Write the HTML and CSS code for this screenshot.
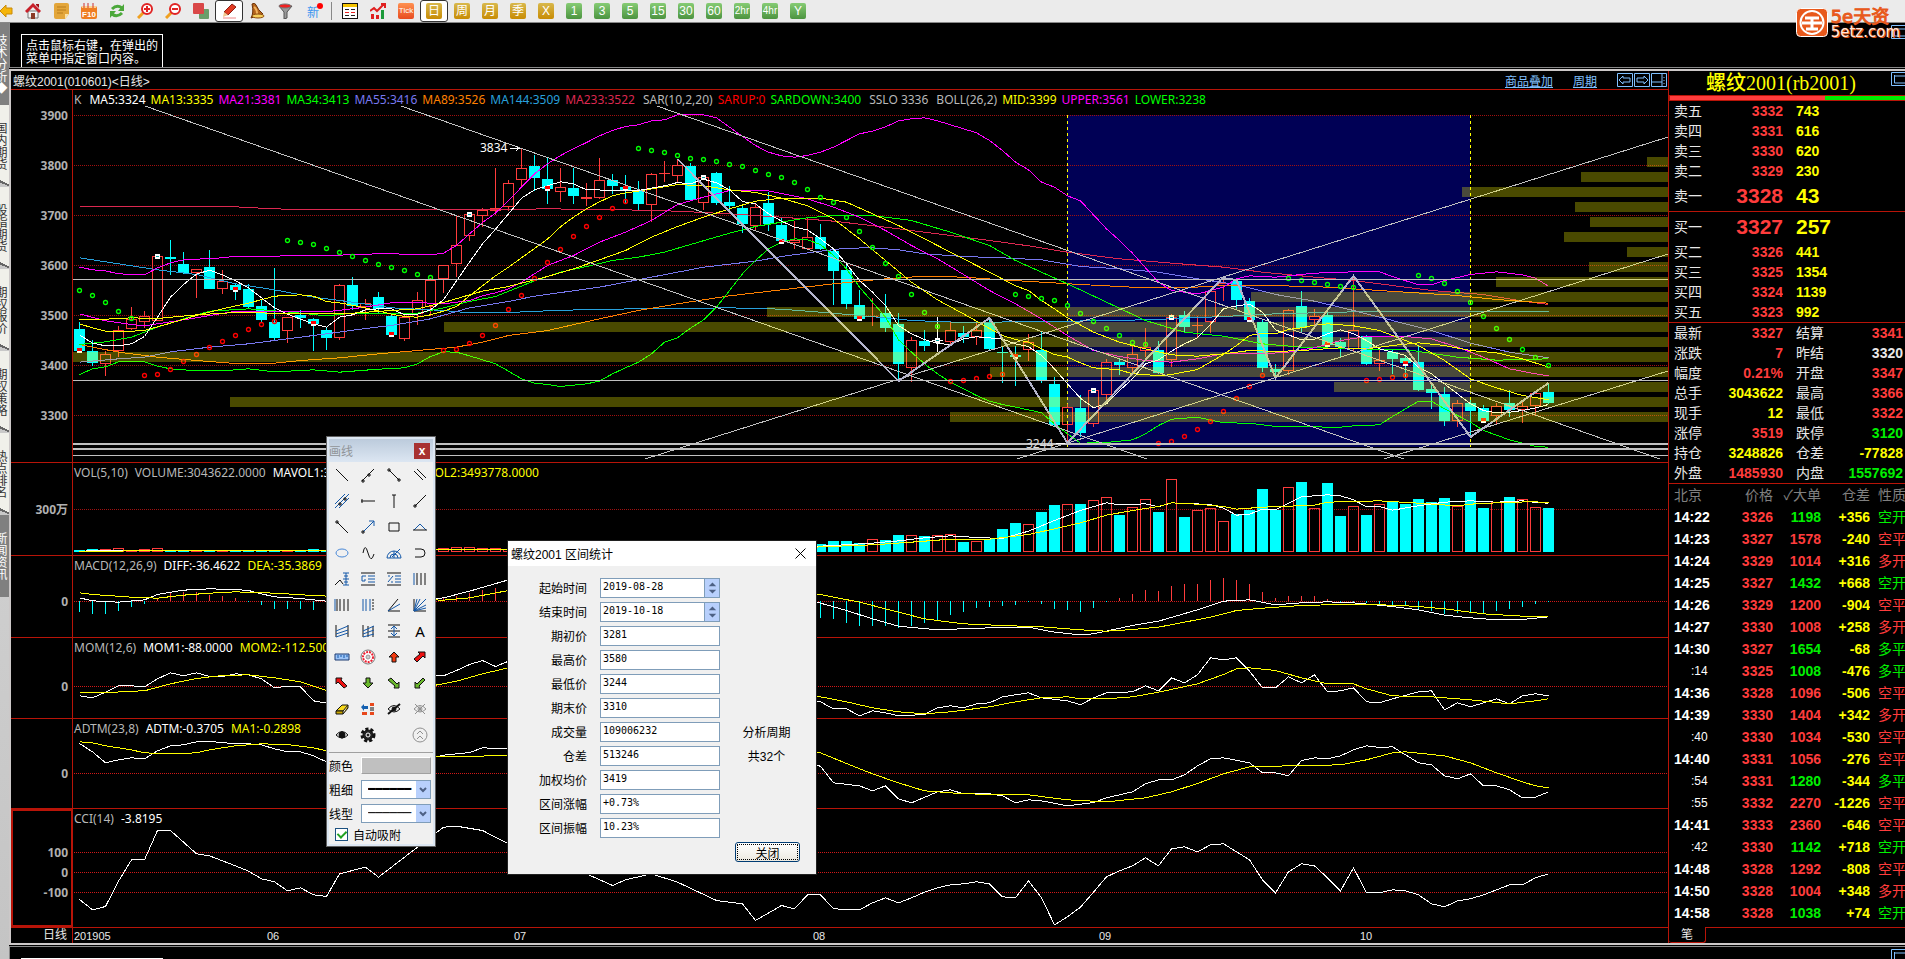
FILE: index.html
```
<!DOCTYPE html>
<html lang="zh-CN">
  <head>
    <meta charset="utf-8">
    <title>螺纹2001(010601)</title>
    <link rel="stylesheet" href="styles.css">
  </head>
  <body>
  <div class="toolbar">
    <button title="后退"><svg viewBox="0 0 16 16"><path d="M3 8L9 2v3h6v6H9v3z" fill="#f5b50a" stroke="#c98a08"/></svg></button>
    <button title="首页"><svg viewBox="0 0 16 16"><path d="M3 8h10v7H3z" fill="#f4f4f4" stroke="#777"/><path d="M0 8l8-8 8 8-2 2-6-6-6 6z" fill="#c8202a"/><path d="M11 1h3v4l-3-3z" fill="#a01018"/><path d="M6 10h4v6H6z" fill="#8a3b28"/></svg></button>
    <button title="公告"><svg viewBox="0 0 16 16"><path d="M1 2q0-2 2-2h11q2 0 2 2v9l-4 5H3q-2 0-2-2z" fill="#e3a63a"/><path d="M16 11l-4 5v-5z" fill="#fbe2a4"/><path d="M4 4h9M4 7h9M4 10h6" stroke="#b87c1c"/></svg></button>
    <button title="F10"><svg viewBox="0 0 16 16"><rect y="3" width="16" height="13" rx="2" fill="#ef7d22"/><path d="M1 4h14" stroke="#ffd28a" stroke-width="2"/><path d="M3 0v5M7 0v5M12 0v5" stroke="#c33"/><text x="8" y="14" text-anchor="middle" font-size="8" font-weight="bold" fill="#fff">F10</text></svg></button>
    <button title="刷新"><svg viewBox="0 0 16 16"><path d="M3 6q5-5 10-1M13 10q-5 5-10 1" fill="none" stroke="#4ba83a" stroke-width="3"/><path d="M15 1v7H9zM1 15V8h6z" fill="#4ba83a"/></svg></button>
    <button title="放大"><svg viewBox="0 0 16 16"><path d="M1 15l6-6" stroke="#f0a020" stroke-width="3"/><circle cx="10" cy="6" r="5" fill="#fff" stroke="#e02424" stroke-width="2"/><path d="M7 6h6M10 3v6" stroke="#e02424" stroke-width="2"/></svg></button>
    <button title="缩小"><svg viewBox="0 0 16 16"><path d="M1 15l6-6" stroke="#f0a020" stroke-width="3"/><circle cx="10" cy="6" r="5" fill="#fff" stroke="#e02424" stroke-width="2"/><path d="M7 6h6" stroke="#e02424" stroke-width="2"/></svg></button>
    <button title="叠加"><svg viewBox="0 0 16 16"><rect x="6" y="6" width="10" height="10" rx="1" fill="#6a9e6a"/><rect width="11" height="11" rx="1" fill="#d94848"/></svg></button>
    <button title="画线" class="on"><svg viewBox="0 0 16 16"><path d="M3 9l8-8 4 3-8 8z" fill="#e23a22" stroke="#8c2216"/><path d="M3 9l4 3-5 2z" fill="#f2c58c"/><path d="M2 15h13" stroke="#e88"/></svg></button>
    <button title="预警"><svg viewBox="0 0 16 16"><path d="M3 1q3-2 4 1 2 5 7 9l-12 4q3-5 1-14z" fill="#b5651d" stroke="#6b3208"/><path d="M5 4q3 2 3 7" fill="none" stroke="#f2b25c" stroke-width="2"/><ellipse cx="9" cy="13" rx="6" ry="2" fill="#f7cf5c" stroke="#8a4a10"/></svg></button>
    <button title="筛选"><svg viewBox="0 0 16 16"><path d="M2 3l5 6v7l3-1V9l5-6z" fill="#999" stroke="#555"/><ellipse cx="8" cy="3" rx="6" ry="2" fill="#f02020" stroke="#777"/></svg></button>
    <button title="新" class="news">新<i></i></button>
    <span class="sep"></span>
    <button title="报价"><svg viewBox="0 0 16 16" shape-rendering="crispEdges"><path d="M0 0h16v16H0z" fill="#fff" stroke="#111" stroke-width="2"/><path d="M1 1h14v3H1z" fill="#f5c400"/><path d="M3 6h4M9 6h4M3 12h4M9 12h4" stroke="#222"/><path d="M3 9h4M9 9h4" stroke="#e22"/></svg></button>
    <button title="走势"><svg viewBox="0 0 16 16"><path d="M1 11h3v5H1zM6 12h3v4H6z" fill="#e02020"/><path d="M11 7h3v9h-3z" fill="#1c9a3a"/><path d="M0 8l4-3 3 3 7-7M11 1h4v4" fill="none" stroke="#e02020" stroke-width="2"/></svg></button>
    <button title="Tick"><b class="tile tick">Tick</b></button>
    <button title="日" class="on"><b class="tile gold">日</b></button>
    <button title="周"><b class="tile gold">周</b></button>
    <button title="月"><b class="tile gold">月</b></button>
    <button title="季"><b class="tile gold">季</b></button>
    <button title="X"><b class="tile gold">X</b></button>
    <button title="1"><b class="tile">1</b></button>
    <button title="3"><b class="tile">3</b></button>
    <button title="5"><b class="tile">5</b></button>
    <button title="15"><b class="tile">15</b></button>
    <button title="30"><b class="tile">30</b></button>
    <button title="60"><b class="tile">60</b></button>
    <button title="2hr"><b class="tile small">2hr</b></button>
    <button title="4hr"><b class="tile small">4hr</b></button>
    <button title="Y"><b class="tile">Y</b></button>
  </div>

  <div class="frame">
    <nav class="tabs">
      <a href="#" class="tab dark">技术分析◆</a>
      <a href="#" class="tab">国内期货</a>
      <a href="#" class="tab">股指期货</a>
      <a href="#" class="tab">期权报价</a>
      <a href="#" class="tab">期权策略</a>
      <a href="#" class="tab">热点排名</a>
      <a href="#" class="tab dark">新闻资讯</a>
    </nav>

    <div class="work">
      <div class="emptypane">
        <p class="hint">点击鼠标右键，在弹出的<br>菜单中指定窗口内容。</p>
        <svg class="maxbox" viewBox="0 0 14 14"><path d="M.5.5h16v13H.5zM3 4h14M3.5 3v8h14"/></svg>
      </div>

      <div class="window">
        <main class="chart">
          <div class="charthead">
            <span>螺纹2001(010601)&lt;日线&gt;</span>
            <a href="#" class="push">商品叠加</a>
            <a href="#">周期</a>
            <svg class="navico" viewBox="0 0 50 14"><path d="M.5.5h15v13H.5zM17.500.5h15v13h-15zM34.500.5h15v13h-15zM2 7l4-4v2h7v4H6v2zM31 7l-4-4v2h-7v4h7v2zM45 1v12M35 9h10M47 4v1M47 7v1M47 10v1"/></svg>
          </div>

          <section class="pane">
            <div class="axis"></div>
            <div class="plot">
              <div class="legend main"><span>K</span><span class="white group">MA5:3324</span><span class="yellow">MA13:3335</span><span class="magenta">MA21:3381</span><span class="green">MA34:3413</span><span class="violet">MA55:3416</span><span class="orange">MA89:3526</span><span class="blue">MA144:3509</span><span class="crimson">MA233:3522</span><span class="group">SAR(10,2,20)</span><span class="red">SARUP:0</span><span class="green">SARDOWN:3400</span><span class="group">SSLO 3336</span><span class="group">BOLL(26,2)</span><span class="yellow">MID:3399</span><span class="magenta">UPPER:3561</span><span class="green">LOWER:3238</span></div>
              <svg id="price" class="price"></svg>
            </div>
          </section>
          <section class="pane">
            <div class="axis"></div>
            <div class="plot">
              <div class="legend"><span>VOL(5,10)</span><span>VOLUME:3043622.0000</span><span class="white">MAVOL1:3413050.0000</span><span class="yellow">MAVOL2:3493778.0000</span></div>
              <svg id="vol" class="vol"></svg>
            </div>
          </section>
          <section class="pane">
            <div class="axis"></div>
            <div class="plot">
              <div class="legend"><span>MACD(12,26,9)</span><span class="white">DIFF:-36.4622</span><span class="yellow">DEA:-35.3869</span></div>
              <svg id="macd" class="macd"></svg>
            </div>
          </section>
          <section class="pane">
            <div class="axis"></div>
            <div class="plot">
              <div class="legend"><span>MOM(12,6)</span><span class="white">MOM1:-88.0000</span><span class="yellow">MOM2:-112.5000</span></div>
              <svg id="mom" class="mom"></svg>
            </div>
          </section>
          <section class="pane">
            <div class="axis"></div>
            <div class="plot">
              <div class="legend"><span>ADTM(23,8)</span><span class="white">ADTM:-0.3705</span><span class="yellow">MA1:-0.2898</span></div>
              <svg id="adtm" class="adtm"></svg>
            </div>
          </section>
          <section class="pane">
            <div class="axis picked"></div>
            <div class="plot">
              <div class="legend"><span>CCI(14)</span><span class="white">-3.8195</span></div>
              <svg id="cci" class="cci"></svg>
            </div>
          </section>
          <section class="pane last">
            <div class="axis">日线</div>
            <div class="plot"><svg class="dates"><text x="1" y="12">201905</text><text x="194" y="12">06</text><text x="441" y="12">07</text><text x="740" y="12">08</text><text x="1026" y="12">09</text><text x="1287" y="12">10</text></svg></div>
          </section>
        </main>

        <aside class="quote">
          <h1>螺纹2001(rb2001)</h1>
          <svg class="maxbox" viewBox="0 0 14 14"><path d="M.5.5h16v13H.5zM3 4h14M3.500 3v8h14"/></svg>
          <div class="ratio"><i></i></div>
          <table class="book">
            <tr><th>卖五</th><td class="up">3332</td><td>743</td></tr>
            <tr><th>卖四</th><td class="up">3331</td><td>616</td></tr>
            <tr><th>卖三</th><td class="up">3330</td><td>620</td></tr>
            <tr><th>卖二</th><td class="up">3329</td><td>230</td></tr>
            <tr class="big"><th>卖一</th><td class="up">3328</td><td>43</td></tr>
          </table>
          <table class="book">
            <tr class="big"><th>买一</th><td class="up">3327</td><td>257</td></tr>
            <tr><th>买二</th><td class="up">3326</td><td>441</td></tr>
            <tr><th>买三</th><td class="up">3325</td><td>1354</td></tr>
            <tr><th>买四</th><td class="up">3324</td><td>1139</td></tr>
            <tr><th>买五</th><td class="up">3323</td><td>992</td></tr>
          </table>
          <table class="stats">
            <tr><th>最新</th><td class="up">3327</td><th>结算</th><td class="up">3341</td></tr>
            <tr><th>涨跌</th><td class="up">7</td><th>昨结</th><td class="flat">3320</td></tr>
            <tr><th>幅度</th><td class="up">0.21%</td><th>开盘</th><td class="up">3347</td></tr>
            <tr><th>总手</th><td>3043622</td><th>最高</th><td class="up">3366</td></tr>
            <tr><th>现手</th><td>12</td><th>最低</th><td class="up">3322</td></tr>
            <tr><th>涨停</th><td class="up">3519</td><th>跌停</th><td class="down">3120</td></tr>
            <tr><th>持仓</th><td>3248826</td><th>仓差</th><td>-77828</td></tr>
            <tr><th>外盘</th><td class="up">1485930</td><th>内盘</th><td class="down">1557692</td></tr>
          </table>
          <table class="ticks">
            <thead><tr><th>北京</th><th>价格</th><th>✓大单</th><th>仓差</th><th>性质</th></tr></thead>
            <tbody id="ticks"></tbody>
          </table>
          <div class="foot"><button>笔</button></div>
        </aside>
      </div>

      <div class="nextpane">
        <p class="hint"></p>
        <svg class="maxbox" viewBox="0 0 14 14"><path d="M.5.5h16v13H.5zM3 4h14M3.500 3v8h14"/></svg>
      </div>
    </div>
  </div>

  <a href="#" class="logo">
    <svg viewBox="0 0 32 30"><rect x=".5" y=".5" width="31" height="28" rx="4" fill="#e8591c" stroke="#fff"/><circle cx="16" cy="14.500" r="11.500" fill="none" stroke="#fff" stroke-width="2"/><path d="M9 10h14M6 15h20M16 10v12M10 21h12" stroke="#fff" stroke-width="3" fill="none"/></svg>
    <span><b>5e天资</b><em>5etz.com</em></span>
  </a>

  <div class="palette">
    <div class="ptitle">画线<button title="关闭">x</button></div>
    <div class="pbody">
      <div class="tools">
        <button title="直线"><svg viewBox="-8 -8 16 16"><path d="M-6-6L6 6"/></svg></button>
        <button title="线段"><svg viewBox="-8 -8 16 16"><path d="M-6 6L6-6M-6 5h2v2h-2zM0-1h2v2H0z"/></svg></button>
        <button title="两点线"><svg viewBox="-8 -8 16 16"><path d="M-5-5L5 5M-6-6h2v2h-2zM4 4h2v2H4z"/></svg></button>
        <button title="平行线"><svg viewBox="-8 -8 16 16"><path d="M-6-4L3 5M-3-6L6 3"/></svg></button>
        <button title="平行线组"><svg viewBox="-8 -8 16 16"><path class="b" d="M-7 3L3-7M-7 7L7-7M-3 7L7-3"/><path d="M-3 2h2v2h-2zM2-3h2v2H2z"/></svg></button>
        <button title="水平线"><svg viewBox="-8 -8 16 16"><path d="M-7 0H7M-6-2v4"/></svg></button>
        <button title="垂直线"><svg viewBox="-8 -8 16 16"><path d="M0-6V7M-2-6h4"/></svg></button>
        <button title="射线"><svg viewBox="-8 -8 16 16"><path d="M-5 5L6-6M-6 4h2v2h-2z"/></svg></button>
        <button title="反向射线"><svg viewBox="-8 -8 16 16"><path d="M6 6L-5-5M-6-6h2v2h-2z"/></svg></button>
        <button title="箭头"><svg viewBox="-8 -8 16 16"><path class="b" d="M-5 5L6-6M1-6h5v5"/><path d="M-6 4h2v2h-2z"/></svg></button>
        <button title="矩形"><svg viewBox="-8 -8 16 16"><path d="M-5-4H5V4H-5z"/></svg></button>
        <button title="三角形"><svg viewBox="-8 -8 16 16"><path class="b" d="M-6 3L0-3L6 3"/><path d="M-7 3H7"/></svg></button>
        <button title="椭圆"><svg viewBox="-8 -8 16 16"><ellipse class="l" rx="6" ry="4"/></svg></button>
        <button title="正弦线"><svg viewBox="-8 -8 16 16"><path d="M-5 0Q-3-11 0 0T6 1"/></svg></button>
        <button title="圆弧"><svg viewBox="-8 -8 16 16"><path class="b" d="M-7 5a7 7 0 0 1 14 0zM-4 5a4 4 0 0 1 8 0M-2 4L6-4M0-2v7"/></svg></button>
        <button title="弧线"><svg viewBox="-8 -8 16 16"><path d="M-5-4H1a4 4 0 0 1 0 8h-6"/></svg></button>
        <button title="波段"><svg viewBox="-8 -8 16 16"><path d="M-7 6L-2 1L1 5"/><path class="b" d="M4-6V6M1-6h6M2-3h4M1 0h6M2 3h4M1 6h6"/></svg></button>
        <button title="黄金分割"><svg viewBox="-8 -8 16 16"><path d="M-7-6H7M-7 6H7"/><path class="b" d="M0-3h7M0 0h7M0 3h7M-2-3h-4v5h3v-2"/></svg></button>
        <button title="百分比"><svg viewBox="-8 -8 16 16"><path d="M-7-6H7M-7 6H7"/><path class="b" d="M1-3h6M1 0h6M1 3h6M-6 3l5-6M-6-3h2M-3 3h2"/></svg></button>
        <button title="周期线"><svg viewBox="-8 -8 16 16"><path class="b" d="M-6-6V6"/><path d="M-3-6V6M1-6V6M5-6V6"/></svg></button>
        <button title="等距线"><svg viewBox="-8 -8 16 16"><path class="b" d="M-7-6V6"/><path d="M-5-6V6M-2-6V6M2-6V6M6-6V6"/></svg></button>
        <button title="时间线"><svg viewBox="-8 -8 16 16"><path class="b" d="M-5-6V6M-2-6V6M2-6V6"/><path d="M5-6V6" stroke-dasharray="2 1"/></svg></button>
        <button title="角度线"><svg viewBox="-8 -8 16 16"><path d="M-6 6H6M-6 6L4-6"/><path class="b" d="M-6 6L6-1"/></svg></button>
        <button title="江恩线"><svg viewBox="-8 -8 16 16"><path d="M-6-6V6H6"/><path class="b" d="M-6 6L6-6M-6 6L6 0M-6 6L6 3M-6 6L0-6M-6 6L-3-6"/></svg></button>
        <button title="通道线"><svg viewBox="-8 -8 16 16"><path d="M-6-6V6M6-6V6"/><path class="b" d="M-6 0L6-5M-6 3L6-1M-6 6L6 2"/></svg></button>
        <button title="回归带"><svg viewBox="-8 -8 16 16"><path d="M-5-6V6M5-5V6M0-5V6"/><path class="b" d="M-5 0L6-5M-5 3L6-1M-5 6L6 3"/></svg></button>
        <button title="区间"><svg viewBox="-8 -8 16 16"><path d="M-6-6H6M-6 0H6M-6 6H6"/><path class="b" d="M0-5V5M-3-2L0-5L3-2M-3 2L0 5L3 2"/></svg></button>
        <button title="文字" class="letter">A</button>
        <button title="测量"><svg viewBox="-8 -8 16 16"><path d="M-7-3H7V3H-7z" fill="#9cc4f8" stroke="#1c3a70"/><path class="b" d="M-4-2v3M-1-2v2M2-2v3M5-2v2"/></svg></button>
        <button title="转盘"><svg viewBox="-8 -8 16 16"><circle r="7" fill="#fff" stroke="#777"/><circle r="5" stroke="#e23" stroke-dasharray="2 1" stroke-width="2"/><circle r="2" fill="#ccc" stroke="#999"/></svg></button>
        <button title="上箭头"><svg viewBox="-8 -8 16 16"><path d="M0-5L5 0H2V5H-2V0H-5z" fill="#f03a10"/></svg></button>
        <button title="右上箭头"><svg viewBox="-8 -8 16 16"><path d="M0 -5H5V1L3-1L-3 5L-6 2L0-3L-2-5z" fill="#e11"/></svg></button>
        <button title="左上箭头"><svg viewBox="-8 -8 16 16"><path d="M0-5H-6V1L-4 -1L2 5L5 3L-1-3z" fill="#e11"/></svg></button>
        <button title="下箭头"><svg viewBox="-8 -8 16 16"><path d="M0 5L5 0H2V-5H-2V0H-5z" fill="#6ab82c"/></svg></button>
        <button title="右下箭头"><svg viewBox="-8 -8 16 16"><path d="M0 5H5V-1L3 1L-3-5L-6-3L1 3z" fill="#6ab82c"/></svg></button>
        <button title="左下箭头"><svg viewBox="-8 -8 16 16"><path d="M0 5H-5V-1L-3 1L3-5L5-3L-1 3z" fill="#6ab82c"/></svg></button>
        <button title="橡皮"><svg viewBox="-8 -8 16 16"><path d="M-6 2L0-4H6L1 2z" fill="#f7d91c"/><path d="M-6 2H1V5H-6zM1 5L6-1V-4" fill="#cca800"/></svg></button>
        <button title="列表"><svg viewBox="-8 -8 16 16"><path d="M-7-2l3-3v2h4v3h-4v2z" fill="#1460b0" stroke="none"/><path d="M2-6h4v3H2zM2 3h4v3H2zM-6 3h5v3h-5z" fill="#e8481c" stroke="none"/><path d="M2-1h4M2 1h4"/></svg></button>
        <button title="隐藏"><svg viewBox="-8 -8 16 16"><path d="M-6 0Q0-7 6 0Q0 6-6 0z"/><circle r="2" fill="#111"/><path d="M-6 5L6-5" stroke-width="2"/></svg></button>
        <button title="全部隐藏"><svg class="g" viewBox="-8 -8 16 16"><path d="M-6 0Q0-7 6 0Q0 6-6 0zM-5-5L5 5M-5 5L5-5"/><circle r="2"/></svg></button>
        <button title="显示"><svg viewBox="-8 -8 16 16"><path d="M-6 0Q0-7 6 0Q0 6-6 0z"/><circle r="3" fill="#111"/></svg></button>
        <button title="设置"><svg viewBox="-8 -8 16 16"><circle r="5" fill="#222"/><circle r="6" stroke-width="3" stroke-dasharray="3 2"/><circle r="2" stroke="#fff"/></svg></button>
        <span></span>
        <button title="收起"><svg class="g" viewBox="-8 -8 16 16"><circle r="7"/><path d="M-3-1L0-4L3-1M-3 4L0 1L3 4"/></svg></button>
      </div>
      <div class="prow"><label for="pcolor">颜色</label><button id="pcolor" class="swatch"></button></div>
      <div class="prow"><label for="pwidth">粗细</label><span class="combo"><select id="pwidth"><option>━━━━━━</option></select><svg viewBox="0 0 14 17"><path d="M4 7l3 3 3-3"/></svg></span></div>
      <div class="prow"><label for="pstyle">线型</label><span class="combo"><select id="pstyle"><option>──────</option></select><svg viewBox="0 0 14 17"><path d="M4 7l3 3 3-3"/></svg></span></div>
      <div class="pcheck"><input type="checkbox" id="snap" checked><label for="snap">自动吸附</label></div>
    </div>
  </div>

  <form class="dialog">
    <div class="dtitle">螺纹2001 区间统计<button type="button" title="关闭"><svg viewBox="0 0 11 11"><path d="M.5.5l10 10M10.500.5l-10 10"/></svg></button></div>
    <div class="fields">
      <label for="f1">起始时间</label><span class="spin"><input id="f1" value="2019-08-28"><svg viewBox="0 0 15 18"><path d="M4 7l4-4 4 4zM4 11l4 4 4-4z"/></svg></span><span></span>
      <label for="f2">结束时间</label><span class="spin"><input id="f2" value="2019-10-18"><svg viewBox="0 0 15 18"><path d="M4 7l4-4 4 4zM4 11l4 4 4-4z"/></svg></span><span></span>
      <label for="f3">期初价</label><input id="f3" value="3281"><span></span>
      <label for="f4">最高价</label><input id="f4" value="3580"><span></span>
      <label for="f5">最低价</label><input id="f5" value="3244"><span></span>
      <label for="f6">期末价</label><input id="f6" value="3310"><span></span>
      <label for="f7">成交量</label><input id="f7" value="109006232"><span>分析周期</span>
      <label for="f8">仓差</label><input id="f8" value="513246"><span>共32个</span>
      <label for="f9">加权均价</label><input id="f9" value="3419"><span></span>
      <label for="f10">区间涨幅</label><input id="f10" value="+0.73%"><span></span>
      <label for="f11">区间振幅</label><input id="f11" value="10.23%"><span></span>
    </div>
    <div class="actions"><button type="button">关闭</button></div>
  </form>
  <script src="chart.js"></script>
  </body>
</html>
```
FILE: styles.css
```
* {
  box-sizing: border-box;
  }
body {
  margin: 0;
  height: 100vh;
  overflow: hidden;
  display: flex;
  flex-direction: column;
  background: #000;
  color: #e8e8e8;
  font: 12px "Liberation Sans", "Noto Sans CJK SC", sans-serif;
  }
button {
  font: inherit;
  padding: 0;
  border: 0;
  background: none;
  color: inherit;
  }
a {
  color: #80c0ff;
  }
table {
  border-collapse: separate;
  border-spacing: 0;
  table-layout: fixed;
  width: 100%;
  }

/* toolbar */
.toolbar {
  display: flex;
  flex: none;
  align-items: stretch;
  height: 23px;
  padding-right: 8px;
  background: #ebebeb;
  border-bottom: 1px solid #888;
  }
.toolbar button {
  display: flex;
  flex: none;
  align-items: center;
  justify-content: center;
  width: 28px;
  }
.toolbar button:first-child {
  margin-left: -9px;
  }
.toolbar svg {
  width: 16px;
  height: 16px;
  }
.toolbar .on {
  background: #fff;
  border: 1px solid #333;
  border-radius: 3px;
  }
.toolbar .news {
  position: relative;
  color: #3c96f0;
  }
.news i {
  position: absolute;
  right: 4px;
  top: 3px;
  width: 6px;
  height: 6px;
  border-radius: 3px;
  background: #f00;
  }
.sep {
  width: 9px;
  margin: 2px 0;
  background: linear-gradient(#888, #888) 4px 0 / 1px 100% no-repeat;
  }
.tile {
  width: 16px;
  height: 16px;
  border-radius: 2px;
  background: linear-gradient(#86cc74, #4c9440);
  color: #fff;
  font-weight: normal;
  font-size: 12px;
  line-height: 16px;
  text-align: center;
  white-space: nowrap;
  }
.gold {
  background: linear-gradient(#d8b84c, #c88c04);
  }
.tick {
  background: linear-gradient(#ff9050, #e84c20);
  font-size: 8px;
  }
.small {
  font-size: 10px;
  }

/* left side tabs */
.frame {
  display: flex;
  flex: 1;
  min-height: 0;
  }
.tabs {
  flex: none;
  width: 9px;
  overflow: hidden;
  background: linear-gradient(#ddd, #c4c4c4);
  }
.tab {
  display: flex;
  align-items: center;
  justify-content: center;
  width: 20px;
  height: 82px;
  margin-left: -9px;
  padding-right: 2px;
  background: linear-gradient(25deg, #c8c8c8 8px, #666 8px, #666 10px, #f0f0ea 10px);
  color: #333;
  line-height: 12px;
  text-decoration: none;
  writing-mode: vertical-rl;
  }
.tab.dark {
  background: #808080;
  color: #fff;
  }

/* work area */
.work {
  display: flex;
  flex: 1;
  flex-direction: column;
  min-width: 0;
  }
.emptypane, .nextpane {
  position: relative;
  flex: none;
  overflow: hidden;
  height: 45px;
  padding: 11px 12px 0 11px;
  border-left: 1px solid #888;
  border-bottom: 1px solid #888;
  }
.hint {
  display: inline-block;
  margin: 0;
  height: 40px;
  padding: 5px 4px 0;
  border: 1px solid #fff;
  color: #fff;
  line-height: 13px;
  white-space: nowrap;
  }
.nextpane {
  flex: 1;
  margin-top: 1px;
  border-top: 1px solid #888;
  border-bottom: 0;
  }
.nextpane .hint {
  width: 142px;
  }
.maxbox {
  position: absolute;
  right: 0;
  top: 2px;
  width: 14px;
  height: 14px;
  fill: none;
  stroke: #80c0ff;
  }
.window {
  display: flex;
  flex: none;
  margin-top: 1px;
  border: 2px solid #ccc8c8;
  border-right: 0;
  }

/* chart */
.chart {
  flex: 1;
  min-width: 0;
  overflow: hidden;
  }
.charthead {
  display: flex;
  align-items: center;
  gap: 20px;
  height: 19px;
  padding: 0 1px 0 2px;
  border-bottom: 1px solid #b81408;
  }
.push {
  margin-left: auto;
  }
.navico {
  width: 50px;
  height: 14px;
  fill: none;
  stroke: #80c0ff;
  }
.pane {
  display: flex;
  border-bottom: 1px solid #b81408;
  }
.axis {
  flex: none;
  width: 62px;
  border-right: 1px solid #b81408;
  }
.axis.picked {
  border: 2px solid #b81408;
  }
.last {
  border: 0;
  }
.last .axis {
  padding-right: 5px;
  line-height: 15px;
  text-align: right;
  }
.plot {
  flex: 1;
  min-width: 0;
  }
.plot svg {
  display: block;
  width: 100%;
  overflow: visible;
  shape-rendering: crispEdges;
  font: bold 12px "Noto Sans", "Noto Sans CJK SC", sans-serif;
  }
.plot .price { height: 356px; }
.plot .vol { height: 76px; }
.plot .macd { height: 65px; }
.plot .mom { height: 64px; }
.plot .adtm { height: 73px; }
.plot .cci { height: 102px; }
.plot .dates {
  height: 15px;
  font: 11px "Liberation Sans", sans-serif;
  fill: #e8e8e8;
  }
.legend {
  display: flex;
  gap: 7px;
  height: 16px;
  padding-left: 1px;
  color: #b8b8b8;
  font: 12px "Noto Sans", sans-serif;
  line-height: 20px;
  white-space: nowrap;
  }
.legend.main {
  gap: 5px;
  }
.group {
  margin-left: 3px;
  }
.white { color: #fff; }
.yellow { color: #ff0; }
.magenta { color: #f0f; }
.green { color: #0f0; }
.violet { color: #7878f0; }
.orange { color: #ff8000; }
.blue { color: #28a0dc; }
.crimson { color: #dc2850; }
.red { color: #f00; }

/* quote panel */
.quote {
  position: relative;
  flex: none;
  width: 237px;
  overflow: hidden;
  background: #000;
  border-left: 1px solid #b81408;
  font-size: 14px;
  }
.quote h1 {
  margin: 0;
  height: 24px;
  padding-right: 12px;
  color: #ff0;
  font: 500 20px "Liberation Serif", "Noto Sans CJK SC", serif;
  line-height: 24px;
  text-align: center;
  }
.quote .maxbox {
  top: 1px;
  }
.ratio {
  height: 6px;
  border: 1px solid #b81408;
  border-right: 0;
  background: #0e0;
  }
.ratio i {
  display: block;
  width: 66%;
  height: 4px;
  background: #ff3c3c;
  }
.quote tr {
  height: 20px;
  line-height: 18px;
  }
.quote th, .quote td {
  padding: 0;
  overflow: hidden;
  white-space: nowrap;
  }
.quote th {
  padding-left: 5px;
  font-weight: normal;
  text-align: left;
  }
.quote td {
  color: #ff0;
  font-weight: bold;
  text-align: right;
  }
.book, .stats {
  border-bottom: 1px solid #b81408;
  }
.book th {
  width: 50px;
  }
.book td:nth-child(2) {
  width: 64px;
  }
.quote .book td:nth-child(3) {
  padding-left: 13px;
  text-align: left;
  }
.quote .big {
  height: 30px;
  }
.big td {
  font-size: 21px;
  }
.stats th {
  width: 50px;
  }
.stats td:nth-child(2) {
  width: 64px;
  }
.quote .stats th:nth-child(3) {
  padding-left: 13px;
  }
.quote .stats td:nth-child(4) {
  padding-right: 2px;
  }
.quote .ticks tr {
  height: 22px;
  line-height: 20px;
  }
.ticks thead th {
  color: #808080;
  }
.quote .ticks thead th {
  padding: 0;
  text-align: right;
  }
.quote .ticks thead th:first-child {
  width: 60px;
  padding-left: 5px;
  text-align: left;
  }
.ticks thead th:nth-child(2) { width: 44px; }
.ticks thead th:nth-child(3) { width: 48px; }
.ticks thead th:nth-child(4) { width: 49px; }
.quote .ticks thead th:last-child {
  padding-left: 8px;
  text-align: left;
  }
.quote .ticks td:first-child {
  padding-left: 5px;
  color: #fff;
  text-align: left;
  }
.quote .ticks td.sec:first-child {
  padding-left: 22px;
  font-size: 12px;
  font-weight: normal;
  }
.quote .ticks td:last-child {
  padding-left: 8px;
  font-weight: normal;
  text-align: left;
  }
.quote .up { color: #ff3c3c; }
.quote .down { color: #00f000; }
.quote .flat { color: #e8e8e8; }
.foot {
  display: flex;
  margin-top: 3px;
  height: 16px;
  }
.foot::after {
  content: "";
  flex: 1;
  border-top: 1px solid #b81408;
  }
.foot button {
  width: 37px;
  border: 1px solid #b81408;
  border-top: 0;
  border-left: 0;
  border-radius: 0 0 3px 3px;
  font-size: 12px;
  line-height: 14px;
  }

/* site logo */
.logo {
  position: absolute;
  right: 5px;
  top: 8px;
  display: flex;
  gap: 3px;
  color: #e8591c;
  text-decoration: none;
  }
.logo svg {
  width: 32px;
  height: 30px;
  }
.logo b, .logo em {
  display: block;
  }
.logo b {
  font: 18px "DejaVu Sans", "Noto Sans CJK SC", sans-serif;
  line-height: 18px;
  -webkit-text-stroke: 1px #e8591c;
  }
.logo em {
  color: #ffe8dc;
  font: 15px "DejaVu Sans", sans-serif;
  line-height: 12px;
  text-shadow: 0 0 1px #e8591c, 1px 1px 0 #e8591c;
  }

/* drawing palette */
.palette {
  position: absolute;
  left: 326px;
  top: 436px;
  width: 110px;
  padding: 2px;
  border: 1px solid #606060;
  background: #dce6f2;
  color: #000;
  }
.ptitle {
  display: flex;
  align-items: center;
  justify-content: space-between;
  height: 23px;
  padding-right: 3px;
  background: linear-gradient(#bccbdc, #dce6f2);
  color: #909498;
  }
.ptitle button {
  width: 16px;
  height: 16px;
  background: #a83232;
  color: #fff;
  font-weight: bold;
  line-height: 14px;
  }
.pbody {
  background: #f0f0f0;
  }
.tools {
  display: grid;
  grid-template-columns: repeat(4, 26px);
  grid-auto-rows: 26px;
  padding-bottom: 4px;
  border-bottom: 1px solid #a0a0a0;
  }
.tools button {
  display: flex;
  align-items: center;
  justify-content: center;
  }
.tools svg {
  width: 16px;
  height: 16px;
  fill: none;
  stroke: #111;
  }
.tools .b { stroke: #1458a8; }
.tools .l { stroke: #4888d8; }
.tools .g { stroke: #909090; }
.tools .letter {
  font: 15px "Noto Sans", sans-serif;
  }
.prow {
  display: flex;
  align-items: center;
  justify-content: space-between;
  height: 24px;
  padding-right: 2px;
  }
.swatch {
  width: 70px;
  height: 17px;
  background: #c0c0c0;
  border: 1px solid #a0a0a0;
  border-top-color: #fff;
  border-left-color: #fff;
  }
.combo {
  position: relative;
  width: 70px;
  height: 19px;
  }
.combo select {
  appearance: none;
  width: 70px;
  height: 19px;
  margin: 0;
  padding: 0 15px 0 6px;
  border: 1px solid #7f9db9;
  border-radius: 0;
  background: #fff;
  color: #000;
  font: 12px "DejaVu Sans Mono", monospace;
  }
.combo svg, .spin svg {
  position: absolute;
  right: 1px;
  top: 1px;
  width: 14px;
  height: 17px;
  background: #b8d0fc;
  fill: none;
  stroke: #4d6185;
  stroke-width: 2;
  }
.pcheck {
  display: flex;
  align-items: center;
  gap: 5px;
  height: 19px;
  padding-left: 6px;
  }
.pcheck input {
  appearance: none;
  width: 13px;
  height: 13px;
  margin: 0;
  border: 1px solid #1c5180;
  background: #fff;
  }
.pcheck input:checked::after {
  content: "";
  display: block;
  width: 4px;
  height: 7px;
  margin: 0 0 0 3px;
  border: solid #21a121;
  border-width: 0 2px 2px 0;
  transform: rotate(45deg);
  }

/* range statistics dialog */
.dialog {
  position: absolute;
  left: 507px;
  top: 540px;
  width: 310px;
  margin: 0;
  border: 1px solid #202020;
  background: #f0f0f0;
  color: #000;
  }
.dtitle {
  display: flex;
  align-items: center;
  justify-content: space-between;
  height: 25px;
  padding: 0 10px 0 3px;
  background: #fff;
  }
.dtitle svg {
  display: block;
  width: 11px;
  height: 11px;
  stroke: #000;
  }
.fields {
  display: grid;
  grid-template-columns: 79px 120px 1fr;
  column-gap: 13px;
  row-gap: 4px;
  padding: 12px 10px 4px 0;
  line-height: 22px;
  grid-auto-rows: 20px;
  }
.fields label {
  text-align: right;
  }
.fields > span:nth-child(3n) {
  text-align: center;
  padding-right: 6px;
  }
.fields input {
  width: 120px;
  height: 20px;
  margin: 0;
  padding: 0 2px 3px;
  border: 1px solid #7f9db9;
  background: #fff;
  color: #000;
  font: 10px "DejaVu Sans Mono", monospace;
  }
.spin {
  position: relative;
  }
.spin input {
  display: block;
  }
.spin svg {
  width: 15px;
  height: 18px;
  border-left: 1px solid #7f9db9;
  fill: #4d6185;
  stroke: none;
  }
.actions {
  display: flex;
  justify-content: flex-end;
  padding: 0 16px 12px 0;
  }
.actions button {
  width: 65px;
  height: 20px;
  border: 1px solid #003c74;
  border-radius: 3px;
  outline: 1px dotted #000;
  outline-offset: -3px;
  background: linear-gradient(#fff, #ece9e0);
  }
```
FILE: chart.js
```
// Levels are stored in thirds of a pixel, one candle every 13px.
var STEP = 13;
var RED = "#ff3c3c", CYAN = "#00ffff";

function px(i) { return 6 + i * STEP; }

function pane(id, offset, gridColor) {
  var out = [];
  var svg = document.getElementById(id);
  var p = {
    y: function(v) { return Math.round(v / 3 - offset); },
    add: function(s) { out.push(s); },
    grid: function(v, label) {
      var y = p.y(v) + 0.5;
      out.push('<line x1="1" x2="100%" y1="' + y + '" y2="' + y + '" stroke="' + gridColor + '" stroke-dasharray="1 1"/>');
      if (label) out.push('<text x="-5" y="' + (y + 4) + '" text-anchor="end" fill="#b0b0b0">' + label + '</text>');
    },
    // data: "index level index level ..."
    line: function(color, data) {
      var n = data.split(" "), pts = [];
      for (var i = 0; i < n.length; i += 2)
        pts.push((px(+n[i]) + 0.5) + "," + (n[i + 1] / 3 - offset + 0.5));
      out.push('<polyline fill="none" stroke="' + color + '" points="' + pts.join(" ") + '"/>');
    },
    seg: function(x1, y1, x2, y2) {
      out.push('<line x1="' + x1 + '" y1="' + y1 + '" x2="' + x2 + '" y2="' + y2 + '" stroke="#c0c0c0"/>');
    },
    rect: function(x, y, w, h, style) {
      out.push('<rect x="' + x + '" y="' + y + '" width="' + w + '" height="' + h + '" ' + style + '/>');
    },
    width: svg.clientWidth,
    draw: function() { svg.innerHTML = out.join(""); }
  };
  return p;
}

// colour, body top, body bottom, high, low
var candles = ("c 687 753 665 757,c 753 789 720 798,r 762 792 754 828,r 690 752 678 770,r 657 688 620 690,r 649 665 633 685,r 468 662 468 662,c 471 476 420 525,c 492 519 456 522,r 508 520 508 594," +
  "c 501 567 450 567,r 544 566 510 581,c 555 570 548 600,c 567 621 553 625,c 618 660 600 666,c 666 714 504 723,r 651 692 651 728,c 645 654 630 684,c 657 671 653 753,c 690 714 680 750," +
  "r 555 713 551 720,c 555 618 531 630,r 608 622 597 660,c 591 627 575 640,c 648 705 640 710,r 650 716 645 723,r 601 642 575 675,r 539 620 535 647,r 496 538 496 580,r 436 491 348 531," +
  "r 343 407 336 422,r 331 347 325 380,r 324 334 204 345,r 250 322 240 332,r 205 241 145 263,c 198 234 165 272,c 237 268 174 311,r 262 275 204 306,c 264 288 203 311,r 291 296 250 318," +
  "r 241 294 174 297,c 240 258 222 281,c 262 272 225 310,c 270 312 243 333,r 222 314 219 365,r 219 222 183 246,r 196 227 177 246,c 198 299 190 301,r 232 308 226 330,c 219 309 215 314," +
  "c 306 318 258 330,c 324 372 318 399,r 321 377 310 390,c 309 372 275 393,c 375 422 354 428,r 420 429 363 447,r 411 446 354 450,c 411 447 372 450,c 453 513 450 614,c 510 612 490 627," +
  "c 615 657 570 660,r 647 650 594 678,c 640 684 582 696,c 672 792 639 846,r 720 803 711 846,c 724 738 690 753,w 719 723 651 755,r 690 725 666 735,c 699 710 678 729,r 690 710 670 735," +
  "c 666 747 655 750,c 756 759 740 850,c 765 771 738 857,r 727 749 702 783,c 750 840 696 848,c 852 976 831 979,r 922 976 912 1028,c 924 998 886 1010,r 871 973 871 980,r 787 886 777 900," +
  "c 786 794 775 826,r 763 805 735 820,r 740 753 684 770,c 750 819 723 822,r 652 780 643 800,c 645 681 633 700,r 676 679 648 710,r 574 667 567 698,r 548 557 534 603,c 543 600 535 630," +
  "c 603 660 594 665,c 666 804 660 815,c 807 815 793 840,r 631 814 627 826,c 618 683 573 700,r 648 661 627 678,c 645 735 640 745,c 726 740 714 775,r 691 747 530 752,c 709 792 705 795," +
  "r 779 791 745 812,c 756 777 750 822,c 774 790 768 840,c 786 870 738 873,c 867 878 850 927,c 882 963 860 978,r 909 962 900 980,c 909 933 900 1010,c 924 963 915 970,r 919 949 910 975," +
  "c 909 931 870 950,r 919 930 900 970,r 880 917 880 945,c 876 909 850 912").split(",");

function drawPrice() {
  var p = pane("price", 6, "#a01010"), i, k;
  p.rect(994, 9, 403, 332, 'fill="#000055"');
  for (i = 0; i < 7; i++) p.grid(46 + 150 * i, 3900 - 100 * i);
  p.add('<path d="M994.5 9V341M1397.5 9V341" stroke="#ff0" stroke-dasharray="3 3"/>');

  for (i = 0; i < candles.length; i++) {
    k = candles[i].split(" ");
    var top = p.y(k[1]), h = Math.max(1, p.y(k[2]) - top), hi = p.y(k[3]), lo = p.y(k[4]);
    var x = px(i), color = k[0] == "c" ? CYAN : k[0] == "w" ? "#fff" : RED;
    if (k[0] == "r" && h > 2) {
      p.rect(x, hi, 1, top - hi, 'fill="' + color + '"');
      p.rect(x, top + h, 1, Math.max(0, lo - top - h), 'fill="' + color + '"');
      p.rect(x - 4.5, top + 0.5, 10, h - 1, 'fill="none" stroke="' + color + '"');
    } else {
      p.rect(x, hi, 1, lo - hi, 'fill="' + color + '"');
      p.rect(x - 5, top, 11, h, 'fill="' + color + '"');
    }
  }

  // moving averages, long to short
  p.line("#dc2850", "0 319 12 319 15 325 18 328 31 328 36 325 42 328 46 332 50 340 54 350 58 362 62 380 66 400 70 420 73 436 76 455 80 475 84 488 88 500 91 515 95 530 98 540 101 555 104 570 108 582 111 602 113 612");
  p.line("#28a0dc", "0 472 3 490 6 508 9 522 12 550 15 568 18 590 21 605 24 622 28 630 30 637 33 636 36 631 40 626 44 625 50 622 54 626 57 635 60 645 62 652 64 660 68 666 72 664 76 662 80 660 84 655 88 648 92 640 95 637 98 634 113 634");
  p.line("#ff8000", "0 732 3 755 6 770 9 780 12 789 15 788 17 780 20 772 23 760 26 750 29 740 31 725 33 705 36 690 40 655 43 630 46 610 50 586 54 568 58 550 62 535 65 527 68 530 71 538 74 545 77 552 81 560 85 562 88 555 91 555 95 558 98 565 102 575 106 585 109 597 113 608");
  p.line("#7878f0", "0 785 3 775 5 770 7 754 10 740 13 730 16 715 19 700 22 684 24 675 27 655 30 622 33 603 35 587 40 560 44 530 48 500 52 482 54 468 57 452 59 443 61 442 63 448 65 460 68 468 71 472 74 478 77 498 80 505 83 515 86 535 89 552 92 582 95 602 98 630 101 660 104 690 107 728 110 755 113 772");
  p.line("#0f0", "0 732 2 724 4 710 6 680 8 655 10 632 13 625 15 631 17 638 19 646 21 638 24 640 26 638 28 622 30 603 32 588 35 541 37 515 39 498 41 480 43 470 45 455 47 432 50 398 52 378 54 365 56 352 58 345 61 345 64 360 67 395 70 435 72 480 74 515 76 550 79 605 82 660 85 695 88 707 91 730 94 740 98 745 102 747 106 770 109 779 113 775");
  p.line("#f0f", "0 640 2 661 4 672 5 676 7 664 9 652 12 632 14 633 19 634 22 620 24 607 26 606 28 610 30 600 31 586 32 577 33 565 34 545 36 495 38 465 40 425 42 395 44 360 46 312 48 290 50 270 53 271 56 295 58 320 60 350 62 390 64 435 66 475 68 522 70 570 72 610 74 655 76 705 78 750 80 768 82 780 84 785 86 775 88 760 91 760 93 755 95 742 97 720 99 708 102 708 104 715 106 740 108 770 110 805 112 820 113 826");
  p.line("#ff0", "0 670 1 682 2 692 3 694 5 690 7 668 9 645 11 625 13 608 15 587 17 583 18 587 19 603 20 607 22 622 24 641 25 648 26 650 27 643 28 632 29 618 30 586 31 556 32 526 33 500 35 444 36 416 37 379 38 350 39 325 40 304 41 286 42 277 43 272 44 265 45 259 46 252 48 256 50 268 51 272 52 276 54 293 56 316 58 355 60 415 62 480 64 545 66 598 68 640 70 684 71 705 72 717 73 725 74 745 75 762 76 770 77 787 78 802 80 808 81 820 82 822 83 826 84 822 86 807 88 762 89 735 90 705 91 698 92 700 93 687 94 682 95 674 96 670 98 676 100 690 101 705 103 735 105 780 107 835 109 862 111 885 113 898");
  p.line("#fff", "0 703 1 728 2 736 3 736 4 730 5 708 6 650 7 590 8 552 9 521 10 509 11 523 12 541 13 562 14 592 15 622 16 641 17 656 18 670 19 680 20 650 21 643 22 628 23 625 24 625 25 643 26 641 27 628 28 598 29 541 30 485 31 430 32 386 33 340 34 293 35 268 36 256 37 244 38 250 39 268 43 270 44 263 45 256 46 246 47 250 48 236 49 247 50 268 51 303 52 310 53 340 54 362 55 380 56 388 57 415 58 445 59 490 60 540 61 575 62 615 63 675 64 700 65 717 66 729 67 732 68 715 69 709 70 712 71 716 72 730 73 738 74 765 75 805 76 850 77 893 78 922 79 910 80 870 81 835 82 790 83 778 84 752 85 730 86 712 87 672 88 625 89 616 90 611 91 635 92 688 93 703 94 718 95 716 96 700 97 688 98 700 99 720 100 745 101 755 102 765 103 800 104 820 105 850 106 880 107 910 108 930 109 937 110 935 111 930 112 922 113 912");
  // BOLL mid, upper, lower
  p.line("#ff0", "0 658 2 656 4 652 6 654 9 643 12 636 15 638 18 638 21 638 24 630 26 625 28 606 30 583 31 572 33 558 36 528 38 505 40 478 42 450 44 410 46 378 48 350 50 325 52 302 54 293 57 293 59 305 61 340 63 375 66 435 68 475 70 515 72 556 73 570 74 600 75 625 76 652 78 695 80 725 82 745 84 763 86 767 88 760 90 750 92 753 94 750 97 742 99 745 101 735 103 727 105 735 107 750 109 757 111 775 113 800");
  p.line("#f0f", "0 500 1 508 2 511 3 520 5 523 6 502 7 487 8 478 11 472 12 467 19 466 21 462 23 460 26 461 27 463 28 458 29 435 30 400 31 366 32 338 33 300 34 260 35 220 36 190 37 165 38 145 39 126 40 106 41 90 42 78 43 73 44 61 45 58 46 43 48 43 49 52 50 80 51 108 52 135 53 155 54 166 55 170 56 165 57 155 58 140 59 120 60 100 61 92 62 79 63 61 64 55 65 52 66 61 67 73 68 85 69 97 70 120 71 150 72 185 73 208 74 245 75 260 76 286 77 301 78 343 79 385 80 420 81 458 82 502 83 545 84 570 86 580 88 560 89 535 90 526 92 530 95 518 98 514 100 514 101 528 103 553 104 553 105 540 107 522 109 514 111 523 112 533 113 557");
  p.line("#0f0", "0 822 1 805 2 799 3 784 5 784 6 797 7 805 9 811 11 811 13 805 15 814 18 808 20 815 23 806 25 802 26 790 27 768 28 754 29 755 30 766 32 790 33 812 34 835 35 848 36 852 37 858 39 850 40 842 41 820 42 802 43 785 44 760 45 725 46 712 47 683 48 658 49 620 50 570 51 520 52 480 53 445 54 425 55 415 56 418 57 432 58 465 59 505 60 560 61 605 62 650 63 718 64 755 65 790 66 820 67 845 68 865 69 885 70 902 71 912 72 920 73 928 74 937 75 970 76 1000 77 1028 79 1026 81 1018 82 1000 83 975 84 956 86 950 88 967 90 968 92 978 94 979 97 980 98 976 100 973 101 948 103 902 104 902 105 925 106 945 107 965 108 990 110 1018 112 1038 113 1040");

  // SAR dots: start index, then levels
  var dots = [
    ["#0f0", 0, "571 586 607 634 655"],
    ["#f00", 5, "826 823 808 784 763 742 724 706 688 673 664"],
    ["#0f0", 16, "421 427 433 445 457 469 481 493 502 511 523 532"],
    ["#f00", 28, "750 748 730 706 676 628 586 535 487 448 409 379 352 325 304"],
    ["#0f0", 43, "145 151 157 166 175 178 184 193 199 211 223 232 247 268 290 307 352 394 442 490 529 583 637 679"],
    ["#f00", 67, "844 841 835 829 823"],
    ["#0f0", 72, "583 589 595 601 616 640 664 685 706 727 733"],
    ["#f00", 83, "1030 1024 1009 988 964 934 895 859 826"],
    ["#0f0", 93, "535 541 547 553 559 562"],
    ["#f00", 99, "841 838 832 826"],
    ["#0f0", 103, "526 535 550 574 607 649 685 718 748 772 796"]
  ];
  for (i = 0; i < dots.length; i++) {
    var lv = dots[i][2].split(" ");
    for (k = 0; k < lv.length; k++)
      p.add('<circle cx="' + (px(dots[i][1] + k) + 0.5) + '" cy="' + (p.y(lv[k]) + 0.5) + '" r="2" fill="none" stroke="' + dots[i][0] + '" stroke-width="1.3" shape-rendering="auto"/>');
  }

  // every sixth bar is marked
  var marks = "750r 469w 567r 669r 703r 343w 265r 265r 232w 422r 653r 720w 769r 871w 652w 657r 731r 788r 960r".split(" ");
  for (i = 0; i < marks.length; i++) {
    var my = p.y(parseInt(marks[i])), dn = marks[i].slice(-1) == "r";
    p.rect(px(i * 6) - 2, my - 2, 5, 5, 'fill="#fff"');
    p.rect(px(i * 6) - (dn ? 2 : 1), my - (dn ? 2 : 0), dn ? 5 : 3, dn ? 3 : 1, 'fill="' + (dn ? "#f00" : "#00a0a0") + '"');
  }

  // horizontal and trend lines
  var flat = [[538, 1], [841, 1], [1028, 2], [1043, 2], [1066, 1]];
  for (i = 0; i < flat.length; i++)
    p.rect(0, p.y(flat[i][0]), p.width, flat[i][1], 'fill="#c0c0c0"');
  p.seg(72, 0, 1074, 353);
  p.seg(328, 0, 1331, 353);
  p.seg(584, 0, 1587, 353);
  p.seg(572, 353, p.width, 31);
  p.seg(944, 353, p.width, 148);
  p.seg(1311, 353, p.width, 265);
  p.add('<polyline points="604.500,53 825.500,275 916.500,212 994.500,337 1149.500,172 1163.500,174 1202.500,272 1280.500,170 1397.500,331 1475.500,277" fill="none" stroke="#b4b4cc" stroke-width="2"/>');

  p.add('<text x="407" y="46" fill="#fff" font-weight="normal">3834</text><path d="M437 42.500h9m-3-2l3 2-3 2" stroke="#fff" fill="none"/>');
  p.add('<text x="953" y="342" fill="#ddd" font-weight="normal">3244</text><path d="M983 337.500h9" stroke="#fff"/>');

  // volume by price, drawn over everything
  var vp = [1574, 1508, 1389, 1502, 1517, 1491, 1554, 1516, 1423, 1178, 694, 371, 928, 0, 917, 1261, 157, 877];
  for (i = 0; i < vp.length; i++)
    p.rect(vp[i], 51 + 15 * i, p.width - vp[i], 10, 'fill="#ff0" fill-opacity=".29"');
  p.draw();
}

function drawVol() {
  var p = pane("vol", 19, "#a01010"), i, v, red;
  p.grid(148, "300万");
  var vols = ("270 267 268 264 269 267 264 270 270 271 270 269 270 270 269 271 269 270 268 269 268 266 269 270 270 268 268 266 264 260 262 265 264 266 262 264 260 " +
    "262 263 262 260 262 264 262 260 263 262 260 262 260 258 262 258 260 258 260 256 252 243 243 250 238 240 225 226 228 226 223 246 244 237 207 189 193 156 135 133 132 121 112 165 142 118 156 58 171 151 145 184 162 150 87 150 82 66 145 69 168 139 165 133 126 132 117 126 114 139 96 144 127 111 118 142 144").split(" ");
  var reds = " 61 64 66 67 69 73 76 78 79 81 82 84 86 87 88 93 95 98 100 106 109 111 112 ";
  for (i = 0; i < vols.length; i++) {
    v = p.y(vols[i]);
    red = i < 57 ? candles[i].charAt(0) == "r" : reds.indexOf(" " + i + " ") >= 0;
    if (red) p.rect(px(i) - 4.5, v + 0.5, 10, p.y(275) - v - 1, 'fill="none" stroke="' + RED + '"');
    else p.rect(px(i) - 5, v, 11, p.y(275) - v, 'fill="' + CYAN + '"');
  }
  p.line("#fff", "0 272 3 269 13 269 14 271 20 270 28 268 36 265 50 263 57 257 61 248 63 241 65 232 67 226 69 231 71 234 73 212 75 180 77 150 79 127 80 133 82 130 83 139 84 127 87 132 88 143 89 164 90 161 91 146 92 148 94 109 96 103 97 106 98 118 99 139 100 138 101 149 103 136 105 125 107 121 109 125 111 121 112 126 113 128");
  p.line("#ff0", "0 272 14 270 28 268 56 262 57 259 61 253 64 245 67 236 70 236 73 222 75 205 77 187 79 164 81 150 83 138 84 127 86 131 88 138 89 146 91 140 93 137 95 134 96 125 98 123 100 121 103 128 106 136 107 131 110 125 112 124 113 127");
  p.draw();
}

function drawMacd() {
  var p = pane("macd", 112, "#d01818"), i, y0, v;
  p.grid(424, "0");
  y0 = p.y(424);
  var bars = ("456 462 462 453 441 432 414 399 396 396 405 408 414 423 435 447 447 447 450 444 440 436 436 436 434 432 430 426 414 408 399 390 384 378 372 370 372 378 384 390 396 402 408 414 418 420 426 430 436 440 444 450 456 460 464 468 470 " +
    "474 477 489 498 498 498 504 498 489 480 465 456 444 441 438 434 426 432 447 450 456 444 426 414 402 390 393 378 372 372 360 354 360 372 396 414 408 408 408 417 423 427 430 434 438 438 450 452 462 460 459 460 453 447 441 432 426").split(" ");
  for (i = 0; i < bars.length; i++) {
    v = p.y(bars[i]);
    p.rect(px(i), Math.min(v, y0), 1, Math.abs(v - y0) || 1, 'fill="' + (v < y0 ? RED : CYAN) + '"');
  }
  p.line("#fff", "0 412 1 421 3 425 5 418 6 402 7 395 8 389 10 385 12 387 13 390 14 400 15 409 17 414 19 422 22 426 26 424 28 412 30 392 33 358 40 352 46 350 52 375 57 428 59 450 61 475 63 497 66 508 69 503 73 500 75 515 77 523 78 520 81 495 83 482 86 448 88 422 90 418 92 433 94 427 96 424 98 427 101 438 103 448 105 464 107 472 109 478 111 477 113 469");
  p.line("#ff0", "0 397 1 402 4 410 6 413 8 404 10 398 12 394 15 398 18 405 22 412 28 419 30 412 33 390 40 370 46 365 52 375 57 402 60 425 62 445 65 475 68 490 71 495 74 499 77 508 79 512 81 507 83 500 85 485 87 470 89 450 91 443 94 435 98 431 101 434 103 438 105 445 108 460 111 467 113 469");
  p.draw();
}

function drawMom() {
  var p = pane("mom", 194, "#d01818");
  p.grid(679, "0");
  p.line("#fff", "0 706 1 712 2 695 3 676 4 676 5 679 6 655 7 637 8 646 9 637 10 648 11 648 12 640 13 643 14 655 15 682 16 677 17 679 18 721 19 728 20 735 22 700 24 670 27 646 28 646 29 630 30 612 31 600 32 618 33 602 40 590 50 680 56 714 57 724 58 745 59 745 60 766 61 751 62 757 63 766 65 762 66 742 67 736 68 742 69 730 70 727 71 709 73 697 74 712 76 721 77 733 78 712 79 697 81 694 82 676 83 691 84 652 85 667 86 643 87 592 88 598 89 592 90 632 91 682 92 682 93 649 94 667 95 643 96 694 97 691 98 682 99 724 100 727 101 715 103 694 104 691 105 748 106 727 107 739 109 715 110 730 111 706 112 700 113 706");
  p.line("#ff0", "0 697 2 697 4 692 5 691 7 670 9 654 11 645 13 643 15 652 17 664 19 690 22 705 25 695 27 677 29 662 31 640 33 622 40 600 50 660 56 702 57 709 59 724 61 742 63 754 65 760 67 754 70 739 72 724 74 712 76 709 77 715 79 715 81 709 83 695 86 670 88 642 89 625 90 622 92 630 94 652 96 670 98 670 99 685 101 706 104 709 107 718 110 730 112 721 113 715");
  p.draw();
}

function drawAdtm() {
  var p = pane("adtm", 275, "#d01818");
  p.grid(940, "0");
  p.line("#fff", "0 849 1 874 2 907 3 898 4 892 5 895 6 871 7 856 8 853 9 844 10 842 11 847 13 850 14 853 15 865 16 874 17 874 18 886 19 904 22 930 25 910 28 884 30 876 31 862 33 865 38 850 45 845 50 870 57 917 58 967 60 976 61 991 62 976 63 1015 64 1027 66 994 67 988 68 1000 70 1000 71 1006 72 1027 73 1018 74 1021 76 1036 78 1026 79 1012 81 994 82 970 83 958 84 958 85 943 86 916 87 895 88 892 90 907 91 937 92 937 93 946 94 900 95 892 96 895 97 886 98 868 99 856 100 861 101 859 103 907 104 913 105 946 106 955 107 940 108 976 109 976 110 988 111 1012 112 1010 113 994");
  p.line("#ff0", "0 844 1 847 2 856 4 868 5 877 7 880 9 877 10 868 12 856 14 850 16 852 18 862 19 871 24 885 28 889 33 885 40 860 50 840 57 877 59 909 61 940 63 967 65 991 68 1000 73 1003 76 1018 79 1024 82 1012 84 994 86 969 88 940 90 919 93 916 97 913 99 898 101 877 102 874 105 886 107 907 109 937 111 964 112 976 113 982");
  p.draw();
}

function drawCci() {
  var p = pane("cci", 365, "#d01818");
  p.grid(1177, "100");
  p.grid(1237, "0");
  p.grid(1297, "-100");
  p.line("#fff", "0 1317 1 1348 2 1338 3 1262 4 1198 5 1198 6 1110 7 1110 8 1145 9 1180 10 1186 12 1216 13 1232 14 1255 15 1264 16 1291 17 1282 18 1303 19 1308 20 1240 22 1220 23 1250 25 1190 27 1130 28 1100 29 1097 31 1110 33 1150 36 1180 39 1240 41 1275 42 1258 44 1240 46 1265 49 1320 51 1330 52 1380 54 1335 55 1345 56 1303 57 1303 58 1345 60 1348 61 1327 62 1312 63 1327 64 1312 65 1295 66 1282 67 1273 68 1270 69 1264 70 1270 71 1309 72 1312 73 1261 74 1312 75 1393 76 1369 77 1340 78 1295 79 1249 80 1231 81 1216 82 1192 83 1216 84 1165 85 1159 86 1174 87 1153 88 1150 89 1174 90 1198 91 1258 92 1297 93 1234 94 1210 95 1216 96 1252 97 1291 98 1222 99 1297 100 1297 101 1288 102 1291 103 1303 104 1330 105 1339 106 1321 107 1315 108 1303 109 1288 110 1273 111 1273 112 1252 113 1240");
  p.draw();
}

// time, price, lots, open interest change, kind
var ticks = [
  ["14:22", 3326, 1198, "+356", "空开", 1], ["14:23", 3327, 1578, "-240", "空平"], ["14:24", 3329, 1014, "+316", "多开"],
  ["14:25", 3327, 1432, "+668", "空开", 1], ["14:26", 3329, 1200, "-904", "空平"], ["14:27", 3330, 1008, "+258", "多开"],
  ["14:30", 3327, 1654, "-68", "多平", 1], [":14", 3325, 1008, "-476", "多平", 1], ["14:36", 3328, 1096, "-506", "空平"],
  ["14:39", 3330, 1404, "+342", "多开"], [":40", 3330, 1034, "-530", "空平"], ["14:40", 3331, 1056, "-276", "空平"],
  [":54", 3331, 1280, "-344", "多平", 1], [":55", 3332, 2270, "-1226", "空平"], ["14:41", 3333, 2360, "-646", "空平"],
  [":42", 3330, 1142, "+718", "空开", 1], ["14:48", 3328, 1292, "-808", "空平"], ["14:50", 3328, 1004, "+348", "多开"],
  ["14:58", 3328, 1038, "+74", "空开", 1]
];

function drawTicks() {
  var html = "";
  for (var i = 0; i < ticks.length; i++) {
    var t = ticks[i], c = t[5] ? "down" : "up";
    html += '<tr><td' + (t[0].length < 4 ? ' class="sec"' : '') + '>' + t[0] + '</td><td class="up">' + t[1] +
      '</td><td class="' + c + '">' + t[2] + '</td><td>' + t[3] + '</td><td class="' + c + '">' + t[4] + '</td></tr>';
  }
  document.getElementById("ticks").innerHTML = html;
}

drawPrice();
drawVol();
drawMacd();
drawMom();
drawAdtm();
drawCci();
drawTicks();
```
